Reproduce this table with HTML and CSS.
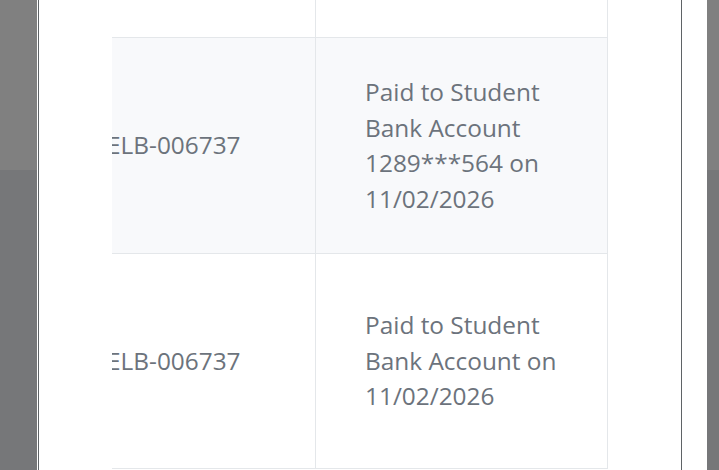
FILE: index.html
```html
<!DOCTYPE html>
<html lang="en">
<head>
    <meta charset="UTF-8">
    <meta name="viewport" content="width=device-width, initial-scale=1.0">
    <title>Payment History</title>
    <link rel="stylesheet" href="styles.css">
</head>
<body>
    <div class="modal">
        <div class="modal-body">
            <div class="table-scroll">
                <table class="history-table">
                    <tbody>
                        <tr>
                            <td class="ref-cell">ELB-006736</td>
                            <td class="note-cell">Paid to Student Bank Account on 10/02/2026</td>
                        </tr>
                        <tr>
                            <td class="ref-cell">ELB-006737</td>
                            <td class="note-cell">Paid to Student Bank Account 1289***564 on 11/02/2026</td>
                        </tr>
                        <tr>
                            <td class="ref-cell">ELB-006737</td>
                            <td class="note-cell">Paid to Student Bank Account on 11/02/2026</td>
                        </tr>
                    </tbody>
                </table>
            </div>
        </div>
    </div>
</body>
</html>
```

FILE: styles.css
```css
/* Page behind the modal, dimmed by the backdrop */
html, body {
    height: 100%;
}
body {
    margin: 0;
    font-family: "Open Sans", "Noto Sans", sans-serif;
    background: linear-gradient(#808080 0, #808080 170px, #767779 170px, #767779 100%);
    overflow: hidden;
}

/* Modal dialog */
.modal {
    margin-left: 37px;
    width: 670px;
    height: 470px;
    background-color: #ffffff;
    overflow: hidden;
}
.modal-body {
    margin-left: 1px;
    width: 569px;
    height: 100%;
    border-left: 1px solid #5f6366;
    border-right: 1px solid #5f6366;
    padding-left: 73px;
    display: flex;
}

/* Scrolled table area (scrolled right and down) */
.table-scroll {
    flex: 1;
    overflow: hidden;
}
.history-table {
    border-collapse: collapse;
    margin-left: -53px;
    margin-top: -178px;
    color: #6c737c;
    font-size: 24.4px;
    line-height: 1.46;
}
.history-table tr {
    height: 215px;
}
.history-table tr:nth-child(even) {
    background-color: #f8f9fb;
}
.history-table td {
    border: 1px solid #e4e7ea;
    padding: 36px 48px;
    vertical-align: middle;
    text-align: left;
}
.history-table td:first-child {
    border-left: none;
}
.ref-cell {
    width: 160px;
    white-space: nowrap;
}
.note-cell {
    width: 194px;
    padding-left: 49px !important;
}
```
